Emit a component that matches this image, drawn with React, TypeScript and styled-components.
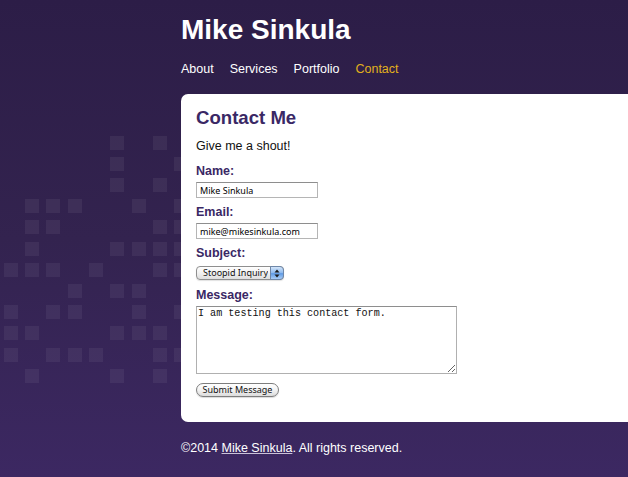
import React from "react";
import styled, { createGlobalStyle } from "styled-components";

const GlobalStyle = createGlobalStyle`
  html, body {
    margin: 0;
    padding: 0;
    overflow-x: hidden;
  }
  body {
    font-family: "Liberation Sans", Arial, Helvetica, sans-serif;
    background: #2c1d47;
  }
`;

const Page = styled.div`
  position: relative;
  min-height: 477px;
  background: linear-gradient(to bottom, #2c1d47 0%, #33234f 50%, #3c2862 100%);
  overflow: hidden;
`;

const Pattern = styled.svg`
  position: absolute;
  left: 0;
  top: 0;
  pointer-events: none;
`;

const Container = styled.div`
  position: relative;
  margin-left: 181px;
  width: 640px;
`;

const Header = styled.header`
  display: flex;
  flex-direction: column;
`;

const SiteTitle = styled.h1`
  margin: 16px 0 0;
  font-size: 28px;
  line-height: 28px;
  font-weight: bold;
  color: #ffffff;
`;

const Nav = styled.nav`
  display: flex;
  gap: 16px;
  margin-top: 18px;
`;

const NavLink = styled.a<{ $active?: boolean }>`
  font-size: 12.5px;
  line-height: 15px;
  color: ${(p) => (p.$active ? "#e2b01c" : "#ffffff")};
  text-decoration: none;
`;

const Card = styled.main`
  margin-top: 17px;
  background: #ffffff;
  border-radius: 7px 0 0 7px;
  padding: 13px 15px 25px;
`;

const Title = styled.h2`
  margin: 0;
  font-size: 18.6px;
  line-height: 22px;
  font-weight: bold;
  color: #3a2865;
`;

const Intro = styled.p`
  margin: 10px 0 10px;
  font-size: 12.5px;
  line-height: 15px;
  color: #111;
`;

const Form = styled.form`
  display: flex;
  flex-direction: column;
  align-items: flex-start;
`;

const Field = styled.div<{ $after?: number }>`
  display: flex;
  flex-direction: column;
  align-items: flex-start;
  margin-bottom: ${(p) => p.$after ?? 7}px;
`;

const Label = styled.label<{ $below?: number }>`
  display: block;
  font-size: 12.5px;
  line-height: 15px;
  font-weight: bold;
  color: #3a2865;
  margin-bottom: ${(p) => p.$below ?? 3}px;
`;

const TextInput = styled.input`
  display: block;
  box-sizing: border-box;
  width: 122px;
  height: 16px;
  margin: 0;
  padding: 0 3px;
  border: 1px solid #b5b5b5;
  border-top-color: #8e8e8e;
  background: #fff;
  font-family: "Noto Sans", "DejaVu Sans", sans-serif;
  font-size: 9px;
  color: #000;
  outline: none;
`;

const SelectWrap = styled.div`
  position: relative;
  width: 88px;
  height: 14px;
`;

const Select = styled.select`
  display: block;
  box-sizing: border-box;
  width: 88px;
  height: 14px;
  margin: 0;
  padding: 0 15px 0 6px;
  border: 1px solid #8f8f8f;
  border-radius: 4px;
  background: linear-gradient(to bottom, #ffffff 0%, #f1f1f1 50%, #dedede 100%);
  font-family: "Noto Sans", "DejaVu Sans", sans-serif;
  font-size: 9px;
  line-height: 12px;
  color: #111;
  appearance: none;
  -webkit-appearance: none;
  outline: none;
  box-shadow: 0 1px 1px rgba(0, 0, 0, 0.12);
`;

const SelectCap = styled.span`
  position: absolute;
  right: 0;
  top: 0;
  box-sizing: border-box;
  width: 14px;
  height: 14px;
  border: 1px solid #6f87a8;
  border-radius: 0 4px 4px 0;
  background: linear-gradient(to bottom, #d4e6fb 0%, #8bb8ee 50%, #5f9ae4 55%, #a9cdf7 100%);
  display: flex;
  align-items: center;
  justify-content: center;
  pointer-events: none;
`;

const TextArea = styled.textarea`
  display: block;
  box-sizing: border-box;
  width: 261px;
  height: 68px;
  margin: 0;
  padding: 1px 1px;
  border: 1px solid #b0b0b0;
  border-top-color: #8e8e8e;
  font-family: "Liberation Mono", "Courier New", monospace;
  font-size: 10.1px;
  line-height: 12px;
  color: #111;
  resize: both;
  outline: none;
`;

const SubmitButton = styled.button`
  display: block;
  box-sizing: border-box;
  width: 83px;
  height: 14px;
  margin: 1px 0 0;
  padding: 0;
  border: 1px solid #7d7d7d;
  border-radius: 8px;
  background: linear-gradient(to bottom, #ffffff 0%, #f3f3f3 50%, #dcdcdc 100%);
  font-family: "Noto Sans", "DejaVu Sans", sans-serif;
  font-size: 9px;
  line-height: 12px;
  color: #111;
  box-shadow: 0 1px 1px rgba(0, 0, 0, 0.15);
`;

const Footer = styled.footer`
  margin-top: 19px;
  font-size: 12.5px;
  line-height: 15px;
  color: #ffffff;
`;

const FooterLink = styled.a`
  color: #ffffff;
  text-decoration: underline;
  text-decoration-color: #c9c2d8;
`;

const COLS = [4, 25, 46, 68, 89, 110, 132, 153, 174];
const ROWS = [136, 157, 178, 199, 220, 242, 263, 284, 305, 326, 348, 369];
const GRID: number[][] = [
  [5, 7],
  [5, 8],
  [5, 7],
  [1, 2, 3, 6, 8],
  [1, 2, 7, 8],
  [1, 5, 6, 7, 8],
  [0, 1, 2, 4, 7, 8],
  [3, 5, 6],
  [0, 2, 3, 6, 8],
  [0, 1, 5, 6, 7],
  [0, 2, 3, 4, 7, 8],
  [1, 5, 7],
];

export default function App() {
  return (
    <>
      <GlobalStyle />
      <Page>
        <Pattern width="190" height="400" viewBox="0 0 190 400">
          {GRID.map((cols, r) =>
            cols.map((c) => (
              <rect
                key={`${r}-${c}`}
                x={COLS[c]}
                y={ROWS[r]}
                width="14"
                height="14"
                fill="rgba(255,255,255,0.06)"
              />
            ))
          )}
        </Pattern>
        <Container>
          <Header>
            <SiteTitle>Mike Sinkula</SiteTitle>
            <Nav>
              <NavLink href="#">About</NavLink>
              <NavLink href="#">Services</NavLink>
              <NavLink href="#">Portfolio</NavLink>
              <NavLink href="#" $active>
                Contact
              </NavLink>
            </Nav>
          </Header>
          <Card>
            <Title>Contact Me</Title>
            <Intro>Give me a shout!</Intro>
            <Form onSubmit={(e) => e.preventDefault()}>
              <Field>
                <Label htmlFor="name">Name:</Label>
                <TextInput id="name" defaultValue="Mike Sinkula" />
              </Field>
              <Field>
                <Label htmlFor="email">Email:</Label>
                <TextInput id="email" defaultValue="mike@mikesinkula.com" />
              </Field>
              <Field $after={8}>
                <Label htmlFor="subject" $below={5}>
                  Subject:
                </Label>
                <SelectWrap>
                  <Select id="subject" defaultValue="stoopid">
                    <option value="stoopid">Stoopid Inquiry</option>
                  </Select>
                  <SelectCap>
                    <svg width="6" height="9" viewBox="0 0 6 9">
                      <path d="M3 0.5 L5.5 3.5 L0.5 3.5 Z" fill="#1a1a1a" />
                      <path d="M3 8.5 L5.5 5.5 L0.5 5.5 Z" fill="#1a1a1a" />
                    </svg>
                  </SelectCap>
                </SelectWrap>
              </Field>
              <Field $after={8}>
                <Label htmlFor="message">Message:</Label>
                <TextArea id="message" defaultValue="I am testing this contact form." />
              </Field>
              <SubmitButton type="submit">Submit Message</SubmitButton>
            </Form>
          </Card>
          <Footer>
            ©2014 <FooterLink href="#">Mike Sinkula</FooterLink>. All rights reserved.
          </Footer>
        </Container>
      </Page>
    </>
  );
}
